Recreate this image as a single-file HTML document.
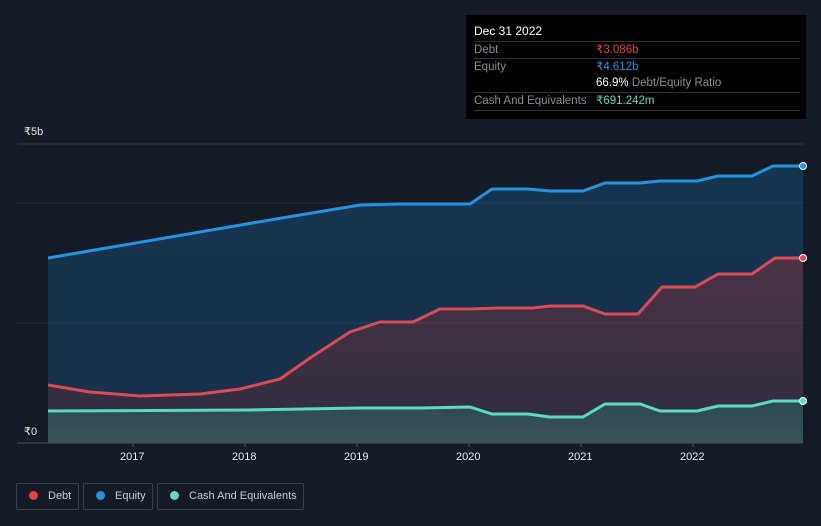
<!DOCTYPE html><html><head><style>
html,body{margin:0;padding:0}
body{background:#151b26;font-family:"Liberation Sans",sans-serif;width:821px;height:526px;overflow:hidden;position:relative}
.tt{position:absolute;left:466px;top:15px;width:340px;height:104px;background:#000;color:#fff;font-size:11.5px}
.row{position:absolute;left:8px;width:326px;border-top:1px solid #333;height:17px;line-height:17px}
.l{color:#8a8f96}
.v{position:absolute;left:122px}
.ax{position:absolute;color:#e8e8e8;font-size:11px}
.lg{position:absolute;top:483px;height:27px;border:1px solid #3b414b;border-radius:2px;color:#c9ccd1;font-size:11px;line-height:25px;box-sizing:border-box;white-space:nowrap}
.d{display:inline-block;width:9px;height:9px;border-radius:50%;margin:0 10px 0 12px;vertical-align:-1px}
</style></head><body>
<svg width="821" height="526" style="position:absolute;left:0;top:0">
<defs>
<linearGradient id="ge" x1="0" y1="0" x2="0" y2="1"><stop offset="0" stop-color="#143550"/><stop offset="1" stop-color="#1a3048"/></linearGradient>
<linearGradient id="gd" x1="0" y1="0" x2="0" y2="1"><stop offset="0" stop-color="#4a3345"/><stop offset="1" stop-color="#2d2d3e"/></linearGradient>
<linearGradient id="gc" x1="0" y1="0" x2="0" y2="1"><stop offset="0" stop-color="#2c4b52"/><stop offset="1" stop-color="#3b5158"/></linearGradient>
</defs>
<line x1="17" y1="144" x2="803" y2="144" stroke="#3a404a"/>
<path d="M48,258 L270,220 L360,205 L400,204 L470,204 L492,189 L528,189 L550,191 L583,191 L605,183 L640,183 L660,181 L697,181 L718,176 L752,176 L773,166 L803,166 L803,443 L48,443Z" fill="url(#ge)"/>
<path d="M48,385 L90,392 L140,396 L200,394 L240,389 L280,379 L310,358 L350,332 L380,322 L413,322 L440,309 L470,309 L500,308 L533,308 L550,306 L583,306 L605,314 L638,314 L662,287 L695,287 L718,274 L752,274 L775,258 L803,258 L803,443 L48,443Z" fill="url(#gd)"/>
<path d="M48,411 L250,410 L360,408 L420,408 L470,407 L492,414 L528,414 L550,417 L583,417 L605,404 L640,404 L660,411 L697,411 L718,406 L752,406 L773,401 L803,401 L803,443 L48,443Z" fill="url(#gc)"/>
<line x1="17" y1="203" x2="803" y2="203" stroke="#ffffff" stroke-opacity=".08"/>
<line x1="17" y1="323" x2="803" y2="323" stroke="#ffffff" stroke-opacity=".08"/>
<path d="M48,258 L270,220 L360,205 L400,204 L470,204 L492,189 L528,189 L550,191 L583,191 L605,183 L640,183 L660,181 L697,181 L718,176 L752,176 L773,166 L803,166" fill="none" stroke="#2394df" stroke-width="3" stroke-linejoin="round"/>
<path d="M48,385 L90,392 L140,396 L200,394 L240,389 L280,379 L310,358 L350,332 L380,322 L413,322 L440,309 L470,309 L500,308 L533,308 L550,306 L583,306 L605,314 L638,314 L662,287 L695,287 L718,274 L752,274 L775,258 L803,258" fill="none" stroke="#d94c5a" stroke-width="3" stroke-linejoin="round"/>
<path d="M48,411 L250,410 L360,408 L420,408 L470,407 L492,414 L528,414 L550,417 L583,417 L605,404 L640,404 L660,411 L697,411 L718,406 L752,406 L773,401 L803,401" fill="none" stroke="#5fd8c4" stroke-width="3" stroke-linejoin="round"/>
<circle cx="803" cy="166" r="3.5" fill="#2394df" stroke="#fff"/>
<circle cx="803" cy="258" r="3.5" fill="#d94c5a" stroke="#fff"/>
<circle cx="803" cy="401" r="3.5" fill="#5fd8c4" stroke="#fff"/>
<line x1="17" y1="443" x2="803" y2="443" stroke="#4a505a"/>
<g stroke="#4a505a"><line x1="133" y1="443" x2="133" y2="447"/><line x1="245" y1="443" x2="245" y2="447"/><line x1="357" y1="443" x2="357" y2="447"/><line x1="469" y1="443" x2="469" y2="447"/><line x1="581" y1="443" x2="581" y2="447"/><line x1="693" y1="443" x2="693" y2="447"/></g>
</svg>
<div class="ax" style="left:24px;top:125px">₹5b</div>
<div class="ax" style="left:24px;top:425px">₹0</div>
<div class="ax" style="left:120px;top:451px">2017</div>
<div class="ax" style="left:232px;top:451px">2018</div>
<div class="ax" style="left:344px;top:451px">2019</div>
<div class="ax" style="left:456px;top:451px">2020</div>
<div class="ax" style="left:568px;top:451px">2021</div>
<div class="ax" style="left:680px;top:451px">2022</div>
<div class="tt">
<div style="position:absolute;left:8px;top:9px;font-size:12px">Dec 31 2022</div>
<div class="row" style="top:26px"><span class="l">Debt</span><span class="v" style="color:#e8404a">₹3.086b</span></div>
<div class="row" style="top:43px"><span class="l">Equity</span><span class="v" style="color:#2394df">₹4.612b</span></div>
<div class="row" style="top:60px;border:0"><span class="v"><b style="font-weight:normal;color:#fff">66.9%</b> <span class="l">Debt/Equity Ratio</span></span></div>
<div class="row" style="top:77px"><span class="l">Cash And Equivalents</span><span class="v" style="color:#5fd8c4">₹691.242m</span></div>
<div class="row" style="top:95px;height:0"></div>
</div>
<div class="lg" style="left:16px;width:63px"><span class="d" style="background:#e8404a"></span>Debt</div>
<div class="lg" style="left:83px;width:70px"><span class="d" style="background:#2394df"></span>Equity</div>
<div class="lg" style="left:157px;width:147px"><span class="d" style="background:#5fd8c4"></span>Cash And Equivalents</div>
</body></html>
